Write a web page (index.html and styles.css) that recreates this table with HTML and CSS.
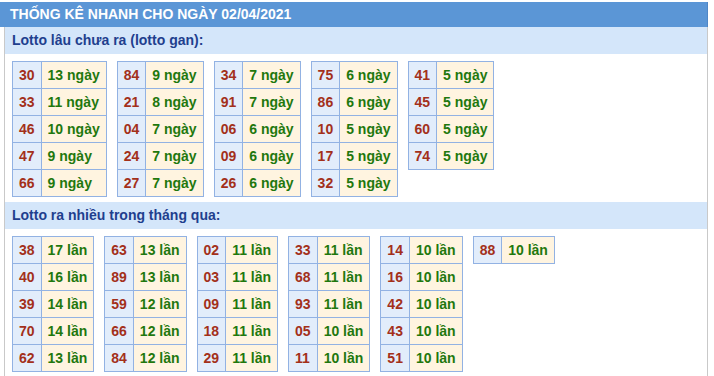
FILE: index.html
```html
<!DOCTYPE html>
<html lang="vi">
<head>
<meta charset="utf-8">
<title>Thống kê nhanh</title>
<link rel="stylesheet" href="styles.css">
</head>
<body>
<div class="box">
  <div class="title">THỐNG KÊ NHANH CHO NGÀY 02/04/2021</div>
  <div class="sub">Lotto lâu chưa ra (lotto gan):</div>
  <div class="tables t1">
    <table><tr><td class="n">30</td><td class="v">13 ngày</td></tr><tr><td class="n">33</td><td class="v">11 ngày</td></tr><tr><td class="n">46</td><td class="v">10 ngày</td></tr><tr><td class="n">47</td><td class="v">9 ngày</td></tr><tr><td class="n">66</td><td class="v">9 ngày</td></tr></table>
    <table><tr><td class="n">84</td><td class="v">9 ngày</td></tr><tr><td class="n">21</td><td class="v">8 ngày</td></tr><tr><td class="n">04</td><td class="v">7 ngày</td></tr><tr><td class="n">24</td><td class="v">7 ngày</td></tr><tr><td class="n">27</td><td class="v">7 ngày</td></tr></table>
    <table><tr><td class="n">34</td><td class="v">7 ngày</td></tr><tr><td class="n">91</td><td class="v">7 ngày</td></tr><tr><td class="n">06</td><td class="v">6 ngày</td></tr><tr><td class="n">09</td><td class="v">6 ngày</td></tr><tr><td class="n">26</td><td class="v">6 ngày</td></tr></table>
    <table><tr><td class="n">75</td><td class="v">6 ngày</td></tr><tr><td class="n">86</td><td class="v">6 ngày</td></tr><tr><td class="n">10</td><td class="v">5 ngày</td></tr><tr><td class="n">17</td><td class="v">5 ngày</td></tr><tr><td class="n">32</td><td class="v">5 ngày</td></tr></table>
    <table><tr><td class="n">41</td><td class="v">5 ngày</td></tr><tr><td class="n">45</td><td class="v">5 ngày</td></tr><tr><td class="n">60</td><td class="v">5 ngày</td></tr><tr><td class="n">74</td><td class="v">5 ngày</td></tr></table>
  </div>
  <div class="sub">Lotto ra nhiều trong tháng qua:</div>
  <div class="tables t2">
    <table><tr><td class="n">38</td><td class="v">17 lần</td></tr><tr><td class="n">40</td><td class="v">16 lần</td></tr><tr><td class="n">39</td><td class="v">14 lần</td></tr><tr><td class="n">70</td><td class="v">14 lần</td></tr><tr><td class="n">62</td><td class="v">13 lần</td></tr></table>
    <table><tr><td class="n">63</td><td class="v">13 lần</td></tr><tr><td class="n">89</td><td class="v">13 lần</td></tr><tr><td class="n">59</td><td class="v">12 lần</td></tr><tr><td class="n">66</td><td class="v">12 lần</td></tr><tr><td class="n">84</td><td class="v">12 lần</td></tr></table>
    <table><tr><td class="n">02</td><td class="v">11 lần</td></tr><tr><td class="n">03</td><td class="v">11 lần</td></tr><tr><td class="n">09</td><td class="v">11 lần</td></tr><tr><td class="n">18</td><td class="v">11 lần</td></tr><tr><td class="n">29</td><td class="v">11 lần</td></tr></table>
    <table><tr><td class="n">33</td><td class="v">11 lần</td></tr><tr><td class="n">68</td><td class="v">11 lần</td></tr><tr><td class="n">93</td><td class="v">11 lần</td></tr><tr><td class="n">05</td><td class="v">10 lần</td></tr><tr><td class="n">11</td><td class="v">10 lần</td></tr></table>
    <table><tr><td class="n">14</td><td class="v">10 lần</td></tr><tr><td class="n">16</td><td class="v">10 lần</td></tr><tr><td class="n">42</td><td class="v">10 lần</td></tr><tr><td class="n">43</td><td class="v">10 lần</td></tr><tr><td class="n">51</td><td class="v">10 lần</td></tr></table>
    <table><tr><td class="n">88</td><td class="v">10 lần</td></tr></table>
  </div>
</div>
</body>
</html>
```
FILE: styles.css
```css
html, body {
  margin: 0;
  padding: 0;
  background: #fff;
}
body {
  font-family: "Liberation Sans", Arial, sans-serif;
  font-size: 14px;
  font-weight: bold;
  padding-top: 2px;
}
.box {
  width: 708px;
  box-sizing: border-box;
  padding-left: 4px;
  height: 374px;
}
.title {
  margin-left: -4px;
  background: #5b96d6;
  color: #fff;
  height: 25px;
  line-height: 25px;
  padding-left: 10px;
  border-right: 1px solid #4f86c6;
}
.sub {
  background: #d4e6fa;
  color: #1f3f8e;
  height: 27px;
  line-height: 27px;
  padding-left: 7px;
  border-left: 1px solid #c9c9c9;
  border-right: 1px solid #c9c9c9;
}
.tables {
  display: flex;
  align-items: flex-start;
  border-left: 1px solid #c9c9c9;
  border-right: 1px solid #c9c9c9;
  padding: 7px 0 0 7px;
}
.t1 {
  gap: 10px;
  padding-bottom: 5px;
}
.t2 {
  gap: 10px;
  padding-top: 7px;
  padding-bottom: 4px;
}
table {
  border-collapse: collapse;
}
td {
  border: 1px solid #92b2e3;
  height: 26px;
  padding: 0 6px;
  line-height: 26px;
  white-space: nowrap;
}
.n {
  background: #e2edfb;
  color: #a3301a;
}
.v {
  background: #fff4e0;
  color: #1f780e;
}
```
